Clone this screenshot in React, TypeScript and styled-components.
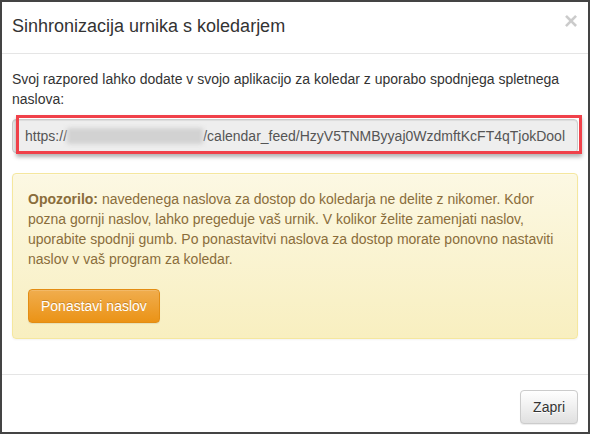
import styled, { createGlobalStyle } from 'styled-components';

const GlobalStyle = createGlobalStyle`
  html, body {
    margin: 0;
    padding: 0;
    background: #fff;
  }
  body {
    font-family: 'Liberation Sans', Arial, sans-serif;
    font-size: 14px;
    line-height: 20px;
    color: #333;
  }
`;

const FEED_PATH = '/calendar_feed/HzyV5TNMByyaj0WzdmftKcFT4qTjokDool';

export default function App() {
  return (
    <>
      <GlobalStyle />
      <Frame>
        <Header>
          <Title>Sinhronizacija urnika s koledarjem</Title>
          <CloseButton aria-label="Close">×</CloseButton>
        </Header>
        <Body>
          <Lead>
            Svoj razpored lahko dodate v svojo aplikacijo za koledar z uporabo spodnjega spletnega
            naslova:
          </Lead>
          <FieldWrap>
            <Field>
              https://
              <Blurred />
              {FEED_PATH}
            </Field>
            <Highlight />
          </FieldWrap>
          <Alert>
            <AlertText>
              <strong>Opozorilo:</strong> navedenega naslova za dostop do koledarja ne delite z
              nikomer. Kdor pozna gornji naslov, lahko pregeduje vaš urnik. V kolikor želite
              zamenjati naslov, uporabite spodnji gumb. Po ponastavitvi naslova za dostop morate
              ponovno nastaviti naslov v vaš program za koledar.
            </AlertText>
            <Button $variant="warning">Ponastavi naslov</Button>
          </Alert>
        </Body>
        <Footer>
          <Button $variant="default">Zapri</Button>
        </Footer>
      </Frame>
    </>
  );
}

const Frame = styled.div`
  width: 590px;
  height: 434px;
  box-sizing: border-box;
  border: 2px solid #444;
  display: flex;
  flex-direction: column;
  overflow: hidden;
  background: #fff;
`;

const Header = styled.div`
  display: flex;
  justify-content: space-between;
  align-items: flex-start;
  padding: 11px 10px 14px;
  border-bottom: 1px solid #e5e5e5;
`;

const Title = styled.h4`
  margin: 0;
  font-size: 18px;
  font-weight: 400;
  line-height: 26px;
  color: #333;
`;

const CloseButton = styled.button`
  padding: 0;
  margin: -4px 0 0;
  border: 0;
  background: transparent;
  font-family: 'Liberation Sans', Arial, sans-serif;
  font-size: 24px;
  font-weight: 700;
  line-height: 1;
  color: #000;
  opacity: 0.2;
  cursor: pointer;
`;

const Body = styled.div`
  padding: 15px 10px;
`;

const Lead = styled.p`
  margin: 0 0 10px;
`;

const FieldWrap = styled.div`
  position: relative;
  margin-bottom: 20px;
`;

const Field = styled.div`
  display: flex;
  align-items: center;
  height: 34px;
  box-sizing: border-box;
  padding: 6px 12px;
  border: 1px solid #ccc;
  border-radius: 4px;
  background: #eee;
  color: #555;
  white-space: nowrap;
  overflow: hidden;
  box-shadow: inset 0 1px 1px rgba(0, 0, 0, 0.075);
`;

const Blurred = styled.span`
  display: inline-block;
  width: 138px;
  height: 16px;
  background: #d2d2d2;
  filter: blur(2px);
`;

const Highlight = styled.div`
  position: absolute;
  left: 4px;
  right: -4px;
  top: -4px;
  bottom: -1px;
  border: 3px solid #f0414a;
  box-shadow: 0 3px 4px rgba(0, 0, 0, 0.3);
  pointer-events: none;
`;

const Alert = styled.div`
  margin-bottom: 20px;
  padding: 15px;
  border: 1px solid #f5e79e;
  border-radius: 4px;
  color: #8a6d3b;
  background-image: linear-gradient(to bottom, #fcf8e3 0%, #f8efc0 100%);
  box-shadow: inset 0 1px 0 rgba(255, 255, 255, 0.25), 0 1px 2px rgba(0, 0, 0, 0.05);
`;

const AlertText = styled.p`
  margin: 0 0 20px;
`;

const Button = styled.button<{ $variant: 'warning' | 'default' }>`
  display: inline-block;
  height: 34px;
  box-sizing: border-box;
  padding: 6px 12px;
  border-radius: 4px;
  font-family: 'Liberation Sans', Arial, sans-serif;
  font-size: 14px;
  line-height: 20px;
  cursor: pointer;
  border: 1px solid ${p => (p.$variant === 'warning' ? '#e38d13' : '#ccc')};
  color: ${p => (p.$variant === 'warning' ? '#fff' : '#333')};
  background-image: ${p =>
    p.$variant === 'warning'
      ? 'linear-gradient(to bottom, #f0ad4e 0%, #eb9316 100%)'
      : 'linear-gradient(to bottom, #fff 0%, #e0e0e0 100%)'};
  text-shadow: ${p => (p.$variant === 'warning' ? '0 -1px 0 rgba(0, 0, 0, 0.2)' : '0 1px 0 #fff')};
  box-shadow: inset 0 1px 0 rgba(255, 255, 255, 0.15), 0 1px 1px rgba(0, 0, 0, 0.075);
`;

const Footer = styled.div`
  flex: 1;
  display: flex;
  justify-content: flex-end;
  align-items: flex-start;
  padding: 15px 10px 0;
  border-top: 1px solid #e5e5e5;
`;
